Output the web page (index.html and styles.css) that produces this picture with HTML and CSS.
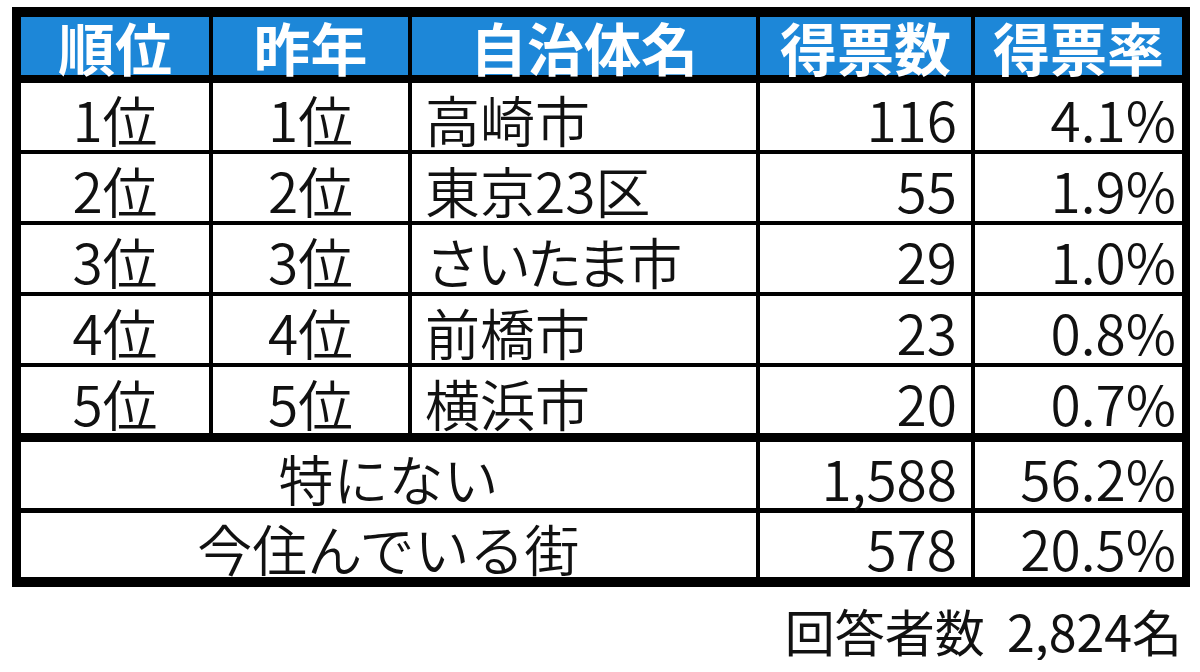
FILE: index.html
```html
<!DOCTYPE html>
<html lang="ja">
<head>
<meta charset="utf-8">
<link rel="stylesheet" href="styles.css">
</head>
<body>
<div class="page">
  <table class="rank">
    <colgroup>
      <col class="c1"><col class="c2"><col class="c3"><col class="c4"><col class="c5">
    </colgroup>
    <thead>
      <tr class="head">
        <th>順位</th><th>昨年</th><th>自治体名</th><th>得票数</th><th class="last">得票率</th>
      </tr>
    </thead>
    <tbody>
      <tr class="row"><td class="ctr">1位</td><td class="ctr">1位</td><td class="name">高崎市</td><td class="num">116</td><td class="pct last">4.1%</td></tr>
      <tr class="row"><td class="ctr">2位</td><td class="ctr">2位</td><td class="name">東京23区</td><td class="num">55</td><td class="pct last">1.9%</td></tr>
      <tr class="row"><td class="ctr">3位</td><td class="ctr">3位</td><td class="name kana">さいたま市</td><td class="num">29</td><td class="pct last">1.0%</td></tr>
      <tr class="row"><td class="ctr">4位</td><td class="ctr">4位</td><td class="name">前橋市</td><td class="num">23</td><td class="pct last">0.8%</td></tr>
      <tr class="row row-end"><td class="ctr">5位</td><td class="ctr">5位</td><td class="name">横浜市</td><td class="num">20</td><td class="pct last">0.7%</td></tr>
      <tr class="row row-extra"><td class="ctr" colspan="3">特にない</td><td class="num">1,588</td><td class="pct last">56.2%</td></tr>
      <tr class="row row-final"><td class="ctr" colspan="3">今住んでいる街</td><td class="num">578</td><td class="pct last">20.5%</td></tr>
    </tbody>
  </table>
  <p class="total">回答者数&nbsp;&nbsp;2,824名</p>
</div>
</body>
</html>
```

FILE: styles.css
```css
* {
  box-sizing: border-box;
}

html, body {
  margin: 0;
  padding: 0;
  background: #ffffff;
}

body {
  font-family: "Noto Sans CJK JP", "Noto Sans", sans-serif;
  color: #111111;
}

.page {
  width: 1190px;
  padding: 7px 0 0 12px;
}

.rank {
  width: 1178px;
  table-layout: fixed;
  border-collapse: separate;
  border-spacing: 0;
  border-style: solid;
  border-color: #000000;
  border-width: 10px 8px 10px 9px;
}

.c1 { width: 192px; }
.c2 { width: 199px; }
.c3 { width: 348px; }
.c4 { width: 215px; }
.c5 { width: 207px; }

.rank th,
.rank td {
  padding: 0;
  border-right: 4px solid #000000;
  border-bottom: 4px solid #000000;
  vertical-align: middle;
  white-space: nowrap;
  overflow: visible;
}

.rank .last {
  border-right: 0;
}

.head th {
  height: 66px;
  border-bottom-width: 8px;
  background: #1d87d8;
  color: #ffffff;
  font-size: 57px;
  font-weight: 700;
  line-height: 1;
  text-align: center;
}

.row td {
  height: 71px;
  font-size: 55px;
  font-weight: 350;
  line-height: 1;
  padding-top: 4px;
}

.row-end td {
  height: 75px;
  border-bottom-width: 9px;
}

.row-extra td {
  height: 71px;
  border-bottom-width: 5px;
}

.row-final td {
  height: 64px;
  border-bottom: 0;
}

.ctr {
  text-align: center;
}

.name {
  text-align: left;
  padding-left: 13px !important;
}

.kana {
  letter-spacing: -4px;
}

.num {
  text-align: right;
  padding-right: 14px !important;
}

.pct {
  text-align: right;
  padding-right: 6px !important;
}

.total {
  margin: 13px 0 0 0;
  padding-right: 8px;
  text-align: right;
  font-size: 50px;
  line-height: 60px;
  font-weight: 400;
  color: #111111;
}
```
